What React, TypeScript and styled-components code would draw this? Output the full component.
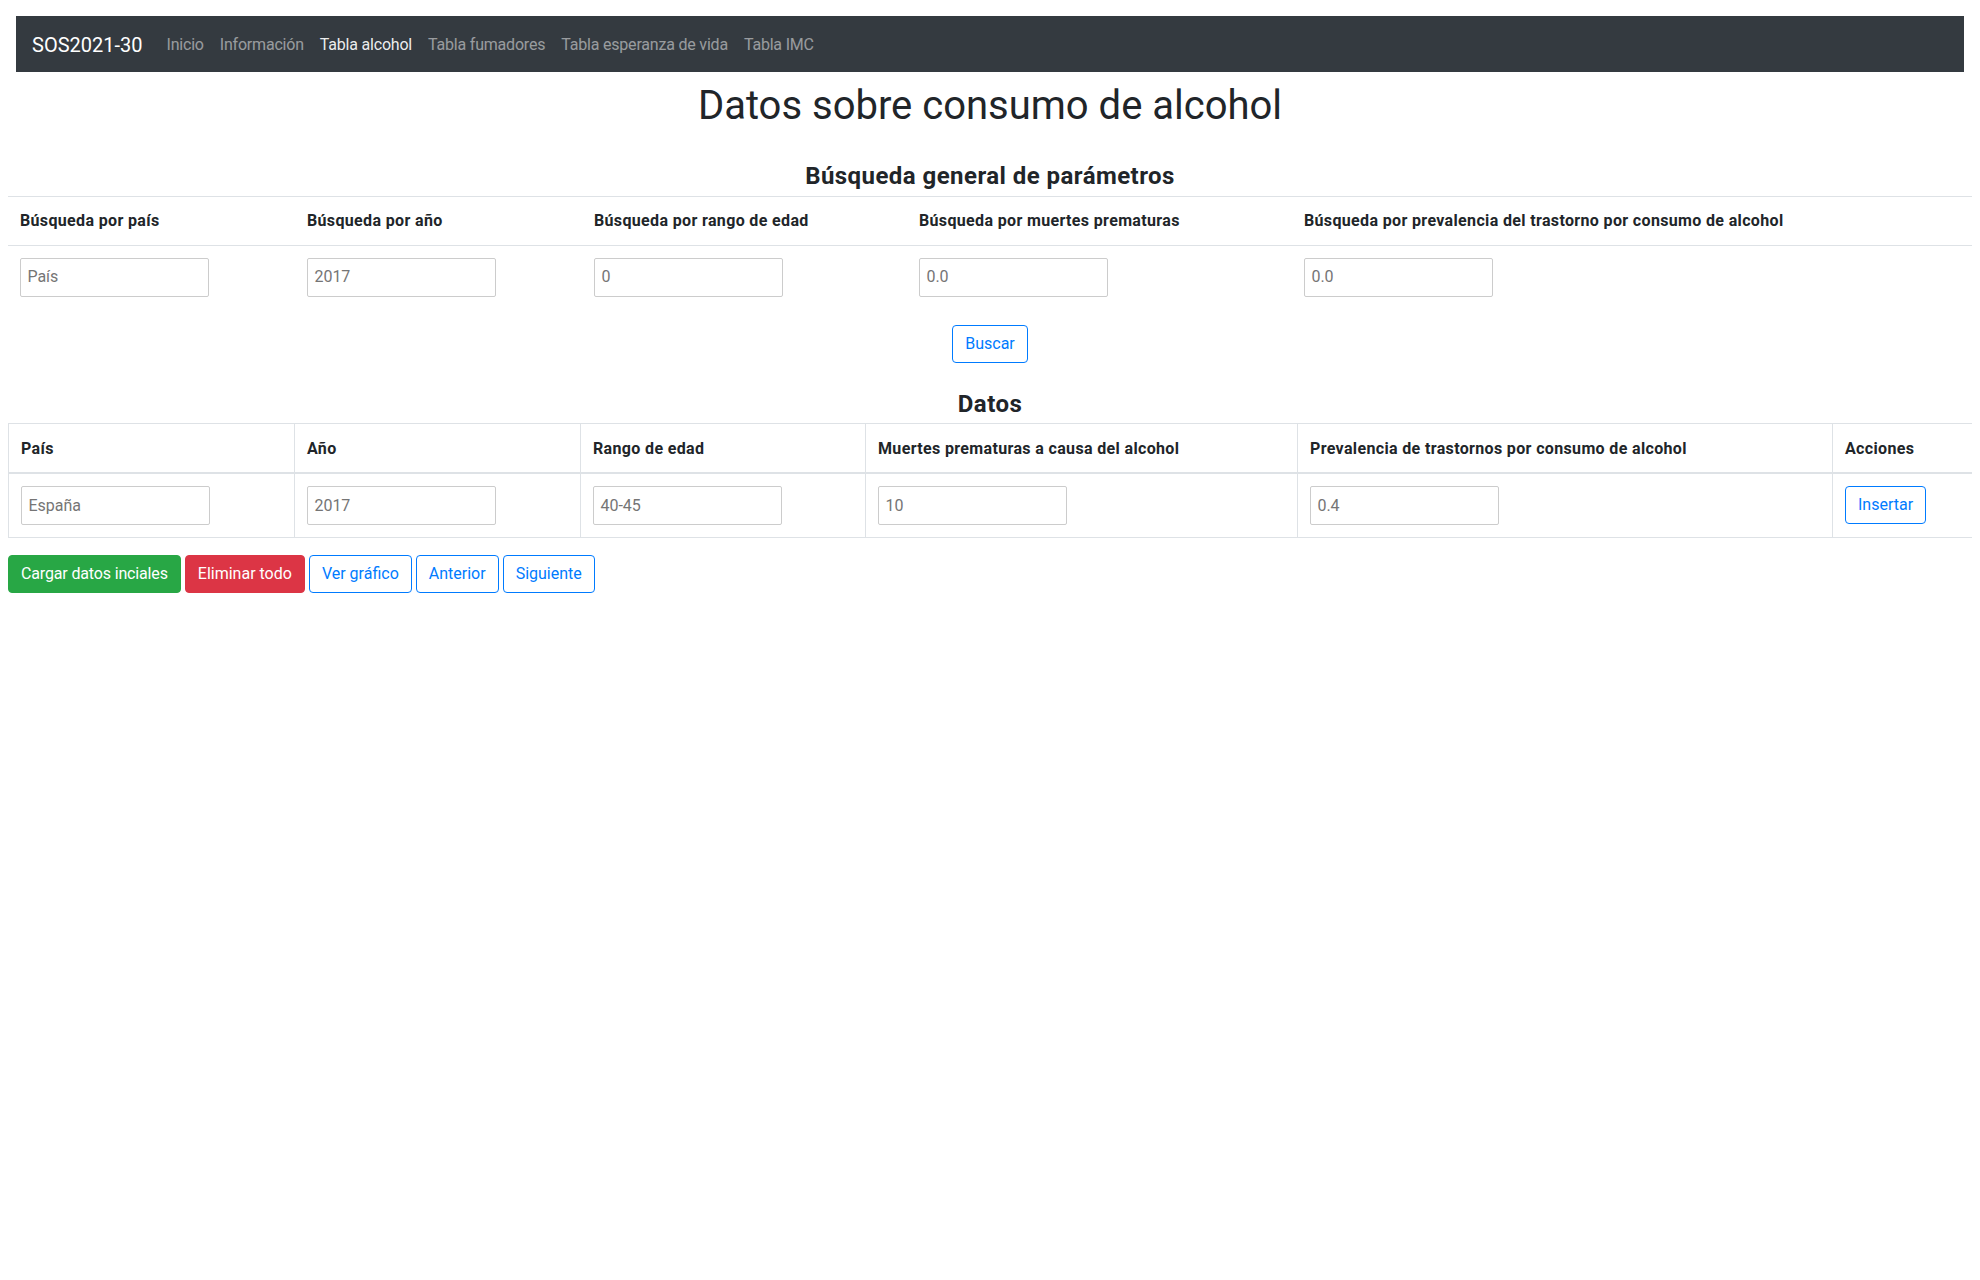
import React from "react";
import styled, { createGlobalStyle } from "styled-components";

const GlobalStyle = createGlobalStyle`
  html, body { background: #ffffff; }
  body {
    margin: 8px;
    font-family: Roboto, "Liberation Sans", sans-serif;
    font-size: 16px;
    line-height: 1.5;
    color: #212529;
  }
  * { box-sizing: border-box; }
`;

const Navbar = styled.nav`
  margin: 8px 8px 0 8px;
  background: #343a40;
  padding: 8px 16px;
  display: flex;
  align-items: center;
  height: 56px;
`;

const Brand = styled.a`
  font-size: 20px;
  line-height: 30px;
  padding: 6px 0 4px 0;
  margin-right: 16px;
  color: #ffffff;
  text-decoration: none;
  white-space: nowrap;
`;

const NavList = styled.div`
  display: flex;
  align-items: center;
`;

const NavLink = styled.a<{ $active?: boolean }>`
  padding: 9px 8px 7px 8px;
  line-height: 24px;
  letter-spacing: -0.2px;
  color: ${(p) => (p.$active ? "rgba(255,255,255,0.92)" : "rgba(255,255,255,0.5)")};
  text-decoration: none;
  white-space: nowrap;
`;

const Title = styled.h1`
  margin: 10px 0 0 0;
  text-align: center;
  font-size: 40px;
  font-weight: 400;
  line-height: 48px;
`;

const SectionTitle = styled.h4<{ $top: number }>`
  margin: ${(p) => p.$top}px 0 5px 0;
  text-align: center;
  font-size: 24px;
  font-weight: 700;
  line-height: 28.8px;
  letter-spacing: 0.45px;
`;

const SearchTable = styled.table`
  width: 100%;
  border-collapse: collapse;
  table-layout: fixed;
`;

const SearchCell = styled.td<{ $head?: boolean }>`
  border-top: 1px solid #dee2e6;
  padding: 12px;
  vertical-align: top;
  text-align: left;
  font-weight: ${(p) => (p.$head ? 700 : 400)};
  letter-spacing: ${(p) => (p.$head ? "0.35px" : "normal")};
  white-space: nowrap;
`;

const DataTable = styled.table`
  width: 100%;
  border-collapse: collapse;
  table-layout: fixed;
  border: 1px solid #dee2e6;
`;

const HeadCell = styled.th`
  border: 1px solid #dee2e6;
  border-bottom: 2px solid #dee2e6;
  padding: 13px 12px 11px 12px;
  text-align: left;
  font-weight: 700;
  letter-spacing: 0.35px;
  vertical-align: bottom;
  white-space: nowrap;
`;

const BodyCell = styled.td`
  border: 1px solid #dee2e6;
  padding: 12px;
  vertical-align: top;
`;

const Field = styled.input<{ $spaced?: boolean }>`
  display: block;
  width: 189px;
  font-family: inherit;
  font-size: 16px;
  line-height: 24px;
  padding: 6.4px;
  margin: 0 0 ${(p) => (p.$spaced ? "8px" : "0")} 0;
  border: 1px solid #cccccc;
  border-radius: 2px;
  color: #757575;
  background: #ffffff;
  &::placeholder { color: #757575; opacity: 1; }
`;

const Centered = styled.div`
  text-align: center;
  padding-top: 8px;
`;

type Variant = "success" | "danger" | "outline";

const Button = styled.button<{ $variant: Variant }>`
  display: inline-block;
  font-family: inherit;
  font-size: 16px;
  line-height: 24px;
  padding: 6px 12px;
  letter-spacing: ${(p) => (p.$variant === "success" ? "-0.15px" : "normal")};
  border-radius: 4px;
  border: 1px solid
    ${(p) => (p.$variant === "success" ? "#28a745" : p.$variant === "danger" ? "#dc3545" : "#007bff")};
  background: ${(p) => (p.$variant === "success" ? "#28a745" : p.$variant === "danger" ? "#dc3545" : "transparent")};
  color: ${(p) => (p.$variant === "outline" ? "#007bff" : "#ffffff")};
  cursor: pointer;
  white-space: nowrap;
`;

const ButtonRow = styled.div`
  display: flex;
  gap: 4px;
  margin-top: 17px;
`;

const searchCols = [
  { label: "Búsqueda por país", ph: "País", w: 287 },
  { label: "Búsqueda por año", ph: "2017", w: 287 },
  { label: "Búsqueda por rango de edad", ph: "0", w: 325 },
  { label: "Búsqueda por muertes prematuras", ph: "0.0", w: 385 },
  { label: "Búsqueda por prevalencia del trastorno por consumo de alcohol", ph: "0.0", w: 680 },
];

const dataCols = [
  { label: "País", ph: "España", w: 286 },
  { label: "Año", ph: "2017", w: 286 },
  { label: "Rango de edad", ph: "40-45", w: 285 },
  { label: "Muertes prematuras a causa del alcohol", ph: "10", w: 432 },
  { label: "Prevalencia de trastornos por consumo de alcohol", ph: "0.4", w: 535 },
];

export default function App() {
  return (
    <>
      <GlobalStyle />
      <Navbar>
        <Brand href="#">SOS2021-30</Brand>
        <NavList>
          <NavLink href="#">Inicio</NavLink>
          <NavLink href="#">Información</NavLink>
          <NavLink href="#" $active>Tabla alcohol</NavLink>
          <NavLink href="#">Tabla fumadores</NavLink>
          <NavLink href="#">Tabla esperanza de vida</NavLink>
          <NavLink href="#">Tabla IMC</NavLink>
        </NavList>
      </Navbar>

      <Title>Datos sobre consumo de alcohol</Title>

      <SectionTitle $top={32}>Búsqueda general de parámetros</SectionTitle>
      <SearchTable>
        <colgroup>
          {searchCols.map((c) => (
            <col key={c.label} style={{ width: c.w }} />
          ))}
        </colgroup>
        <tbody>
          <tr>
            {searchCols.map((c) => (
              <SearchCell key={c.label} $head>{c.label}</SearchCell>
            ))}
          </tr>
          <tr>
            {searchCols.map((c) => (
              <SearchCell key={c.label}>
                <Field $spaced placeholder={c.ph} />
              </SearchCell>
            ))}
          </tr>
        </tbody>
      </SearchTable>

      <Centered>
        <Button $variant="outline">Buscar</Button>
      </Centered>

      <SectionTitle $top={27}>Datos</SectionTitle>
      <DataTable>
        <colgroup>
          {dataCols.map((c) => (
            <col key={c.label} style={{ width: c.w }} />
          ))}
          <col style={{ width: 140 }} />
        </colgroup>
        <thead>
          <tr>
            {dataCols.map((c) => (
              <HeadCell key={c.label}>{c.label}</HeadCell>
            ))}
            <HeadCell>Acciones</HeadCell>
          </tr>
        </thead>
        <tbody>
          <tr>
            {dataCols.map((c) => (
              <BodyCell key={c.label}>
                <Field placeholder={c.ph} />
              </BodyCell>
            ))}
            <BodyCell>
              <Button $variant="outline">Insertar</Button>
            </BodyCell>
          </tr>
        </tbody>
      </DataTable>

      <ButtonRow>
        <Button $variant="success">Cargar datos inciales</Button>
        <Button $variant="danger">Eliminar todo</Button>
        <Button $variant="outline">Ver gráfico</Button>
        <Button $variant="outline">Anterior</Button>
        <Button $variant="outline">Siguiente</Button>
      </ButtonRow>
    </>
  );
}
